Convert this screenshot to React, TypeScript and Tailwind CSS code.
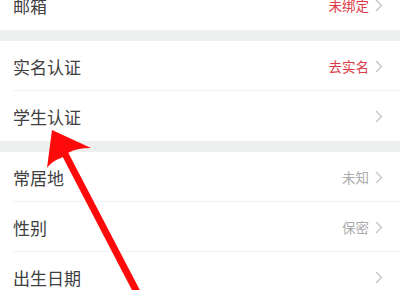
import React from "react";

const Chevron = () => (
  <svg width="8" height="13" viewBox="0 0 8 13" className="ml-[6px] shrink-0">
    <path d="M1.5 1.5 L6.5 6.5 L1.5 11.5" fill="none" stroke="#c4c4c4" strokeWidth="1.4" strokeLinecap="round" strokeLinejoin="round" />
  </svg>
);

type RowProps = { label: string; value?: string; red?: boolean; divider?: boolean };

const Row = ({ label, value, red, divider }: RowProps) => (
  <div className="relative flex h-[50px] items-center bg-white pl-[13px] pr-[17px]">
    <span className="flex-1 pt-[2px] text-[17px] text-[#404040]">{label}</span>
    {value && (
      <span className={"pt-[1px] text-[13.5px] " + (red ? "text-[#dc3a45]" : "text-[#ababab]")}>{value}</span>
    )}
    <Chevron />
    {divider && <div className="absolute bottom-0 left-[13px] right-0 h-px bg-[#f0f0f0]" />}
  </div>
);

export default function App() {
  return (
    <div
      className="relative h-[290px] w-[400px] overflow-hidden bg-white"
      style={{ fontFamily: '"Noto Sans CJK SC", "Noto Sans", sans-serif' }}
    >
      <div className="-mt-[20px] flex flex-col">
        <Row label="邮箱" value="未绑定" red />
        <div className="h-[11px] bg-[#eef0f0]" />
        <Row label="实名认证" value="去实名" red divider />
        <Row label="学生认证" />
        <div className="h-[11px] bg-[#eef0f0]" />
        <Row label="常居地" value="未知" divider />
        <Row label="性别" value="保密" divider />
        <Row label="出生日期" />
      </div>
      <svg className="pointer-events-none absolute left-0 top-0" width="400" height="290" viewBox="0 0 400 290">
        <line x1="64" y1="152" x2="139" y2="296" stroke="#ff0a0a" strokeWidth="7" />
        <path d="M52 130 L91 148 Q76 148 68 153 L61 158 Q52 161 47 168 Z" fill="#ff0a0a" />
      </svg>
    </div>
  );
}
